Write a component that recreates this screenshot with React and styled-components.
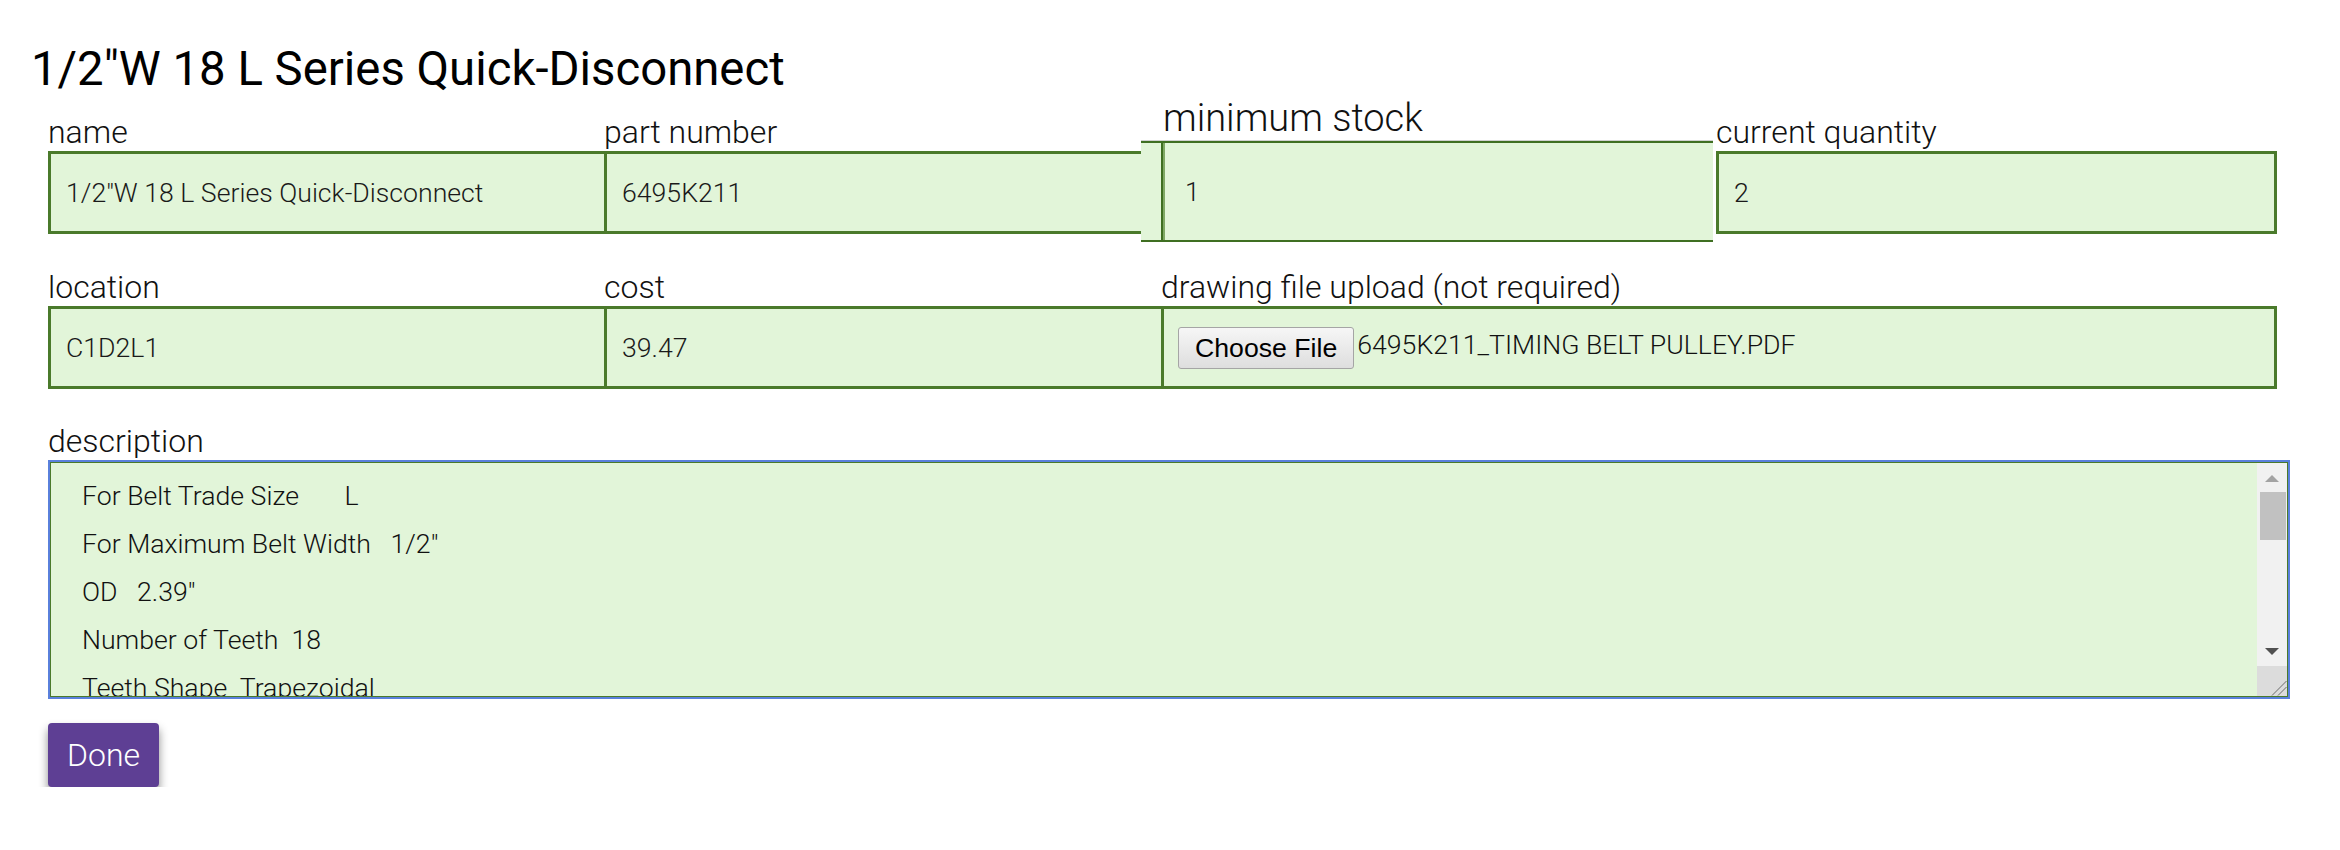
import React from "react";
import styled, { createGlobalStyle } from "styled-components";

const GREEN = "#4a7a2b";
const FILL = "#e2f5d9";

const GlobalStyle = createGlobalStyle`
  html, body { margin: 0; padding: 0; background: #ffffff; }
  body { font-family: Roboto, "Noto Sans", sans-serif; color: #111; }
  * { box-sizing: border-box; }
`;

const Page = styled.div`
  padding-top: 45px;
`;

const Title = styled.h1`
  margin: 0 0 0 31px;
  font-family: Roboto, sans-serif;
  font-weight: 400;
  font-size: 47.3px;
  line-height: 48px;
  color: #000;
`;

const Form = styled.form`
  margin: 2px 0 0 48px;
  width: 2229px;
`;

const Row = styled.div`
  display: grid;
  grid-template-columns: 556px 557px 555px 561px;
  align-items: end;
  margin-top: ${(p) => p.$top || 0}px;
`;

const Cell = styled.div`
  display: flex;
  flex-direction: column;
  grid-column: ${(p) => (p.$span ? `span ${p.$span}` : "auto")};
  min-width: 0;
`;

const Label = styled.label`
  font-family: Roboto, sans-serif;
  font-weight: 300;
  font-size: 32px;
  line-height: 38px;
  color: #111;
  white-space: nowrap;
`;

const Box = styled.input`
  display: block;
  width: 100%;
  height: 83px;
  margin: 0;
  padding: 0 15px;
  background: ${FILL};
  border: 3px solid ${GREEN};
  border-right: ${(p) => (p.$last ? `3px solid ${GREEN}` : "none")};
  border-radius: 0;
  font-family: Roboto, sans-serif;
  font-weight: 300;
  font-size: 26.67px;
  color: #1a1a1a;
  outline: none;
`;

const FocusCell = styled(Cell)`
  margin-bottom: -8px;
  position: relative;
  z-index: 1;
`;

const BigLabel = styled(Label)`
  font-size: 38px;
  line-height: 46px;
  padding-left: 2px;
`;

const FocusFrame = styled.div`
  display: flex;
  height: 101px;
  margin-left: -20px;
  width: calc(100% + 17px);
  padding-left: 20px;
  background: ${FILL};
  border-top: 2px solid #3f6f22;
  border-bottom: 2px solid #3f6f22;
  box-shadow: 0 -1px 0 rgba(0, 0, 0, 0.18);
`;

const FocusInput = styled.input`
  flex: 1;
  min-width: 0;
  height: 100%;
  margin: 0;
  padding: 0 22px;
  background: transparent;
  border: none;
  border-left: 2px solid #3f6f22;
  box-shadow: inset 2px 0 0 #7fa864;
  font-family: Roboto, sans-serif;
  font-weight: 300;
  font-size: 26.67px;
  color: #1a1a1a;
  outline: none;
`;

const FileBox = styled.div`
  display: flex;
  align-items: center;
  height: 83px;
  padding: 0 14px;
  background: ${FILL};
  border: 3px solid ${GREEN};
`;

const ChooseButton = styled.button`
  height: 42px;
  padding: 0 16px;
  margin-top: 1px;
  border: 1px solid #a5a5a5;
  border-radius: 3px;
  background: linear-gradient(#f6f6f6, #dedede);
  font-family: "Liberation Sans", Arial, sans-serif;
  font-size: 26.67px;
  color: #000;
  cursor: pointer;
`;

const FileName = styled.span`
  margin-left: 3px;
  margin-bottom: 6px;
  font-family: Roboto, sans-serif;
  font-weight: 300;
  font-size: 26.67px;
  color: #111;
  white-space: nowrap;
`;

const DescriptionBlock = styled.div`
  display: flex;
  flex-direction: column;
  margin-top: 33px;
`;

const DescriptionFrame = styled.div`
  display: flex;
  width: 2242px;
  height: 239px;
  background: ${FILL};
  border: 3px solid ${GREEN};
  outline: 2px solid #5a80dc;
  outline-offset: -2px;
`;

const Description = styled.textarea`
  flex: 1;
  min-width: 0;
  height: 100%;
  margin: 0;
  padding: 9px 31px;
  background: transparent;
  border: none;
  outline: none;
  resize: none;
  overflow: hidden;
  font-family: Roboto, sans-serif;
  font-weight: 300;
  font-size: 26.67px;
  line-height: 48px;
  color: #111;
  white-space: pre-wrap;
`;

const ScrollRail = styled.div`
  display: flex;
  flex-direction: column;
  width: 30px;
  flex: none;
  background: #f1f1f1;
`;

const ArrowButton = styled.div`
  display: flex;
  align-items: center;
  justify-content: center;
  height: 30px;
  flex: none;
`;

const Arrow = styled.span`
  width: 0;
  height: 0;
  border-left: 7px solid transparent;
  border-right: 7px solid transparent;
  ${(p) =>
    p.$dir === "up"
      ? `border-bottom: 7px solid ${p.$color};`
      : `border-top: 7px solid ${p.$color};`}
`;

const Track = styled.div`
  flex: 1;
  padding: 0 1px 0 3px;
`;

const Thumb = styled.div`
  height: 48px;
  margin-top: -1px;
  background: #c1c1c1;
`;

const Corner = styled.div`
  height: 30px;
  flex: none;
  background: #dcdcdc;
`;

const DoneButton = styled.button`
  display: block;
  margin-top: 24px;
  width: 111px;
  height: 64px;
  padding: 0;
  border: none;
  border-radius: 4px;
  background: #5e3f94;
  box-shadow: 0 6px 10px rgba(0, 0, 0, 0.45);
  font-family: Roboto, sans-serif;
  font-weight: 300;
  font-size: 32px;
  color: #ffffff;
  cursor: pointer;
`;

const descriptionText = [
  "For Belt Trade Size       L",
  "For Maximum Belt Width   1/2\"",
  "OD   2.39\"",
  "Number of Teeth  18",
  "Teeth Shape  Trapezoidal",
  "Pitch  3/8\"",
  "Pitch Diameter  2.15\"",
  "Face Width  1\"",
  "Bushing Style  Quick-Disconnect",
  "Bushing Trade No.  JA",
  "Material  Steel",
  "Flange Type  Flanged",
  "Flange OD  2.66\"",
  "Overall Width  1 1/16\"",
].join("\n");

function Field({ label, value, last }) {
  return (
    <Cell>
      <Label>{label}</Label>
      <Box type="text" defaultValue={value} $last={last} />
    </Cell>
  );
}

function ResizeGrip() {
  return (
    <svg width="30" height="30" viewBox="0 0 30 30" aria-hidden="true">
      <line x1="15" y1="29.5" x2="29.5" y2="15" stroke="#6a6a6a" strokeWidth="1" />
      <line x1="21" y1="29.5" x2="29.5" y2="21" stroke="#6a6a6a" strokeWidth="1" />
    </svg>
  );
}

export default function App() {
  return (
    <Page>
      <GlobalStyle />
      <Title>1/2"W 18 L Series Quick-Disconnect</Title>
      <Form onSubmit={(e) => e.preventDefault()}>
        <Row>
          <Field label="name" value={'1/2"W 18 L Series Quick-Disconnect'} />
          <Field label="part number" value="6495K211" />
          <FocusCell>
            <BigLabel>minimum stock</BigLabel>
            <FocusFrame>
              <FocusInput type="text" defaultValue="1" />
            </FocusFrame>
          </FocusCell>
          <Field label="current quantity" value="2" last />
        </Row>
        <Row $top={34}>
          <Field label="location" value="C1D2L1" />
          <Field label="cost" value="39.47" />
          <Cell $span={2}>
            <Label>drawing file upload (not required)</Label>
            <FileBox>
              <ChooseButton type="button">Choose File</ChooseButton>
              <FileName>6495K211_TIMING BELT PULLEY.PDF</FileName>
            </FileBox>
          </Cell>
        </Row>
        <DescriptionBlock>
          <Label>description</Label>
          <DescriptionFrame>
            <Description defaultValue={descriptionText} />
            <ScrollRail>
              <ArrowButton>
                <Arrow $dir="up" $color="#a3a3a3" />
              </ArrowButton>
              <Track>
                <Thumb />
              </Track>
              <ArrowButton>
                <Arrow $dir="down" $color="#505050" />
              </ArrowButton>
              <Corner>
                <ResizeGrip />
              </Corner>
            </ScrollRail>
          </DescriptionFrame>
        </DescriptionBlock>
        <DoneButton type="button">Done</DoneButton>
      </Form>
    </Page>
  );
}
